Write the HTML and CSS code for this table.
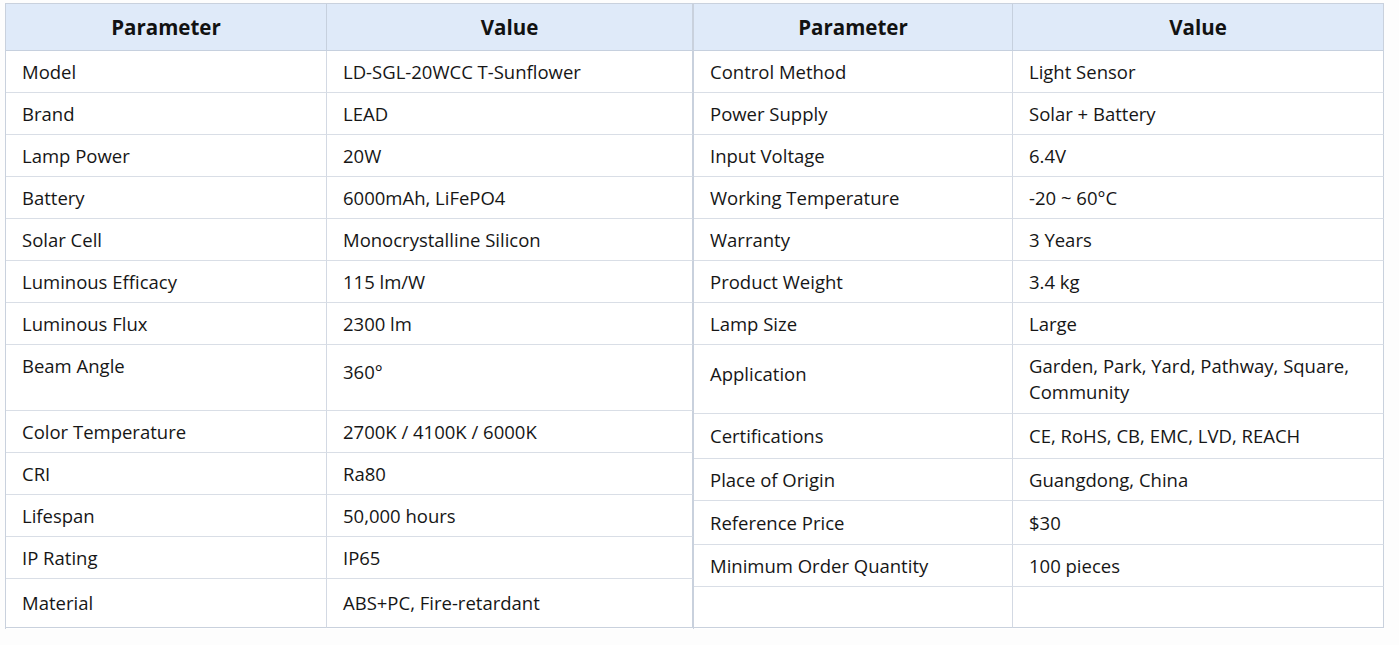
FILE: index.html
```html
<!DOCTYPE html>
<html lang="en">
<head>
<meta charset="utf-8">
<title>Specifications</title>
<link rel="stylesheet" href="styles.css">
</head>
<body>
<div class="wrap">
  <div class="spec spec-left">
    <div class="cell head">Parameter</div><div class="cell head">Value</div>
    <div class="cell">Model</div><div class="cell">LD-SGL-20WCC T-Sunflower</div>
    <div class="cell">Brand</div><div class="cell">LEAD</div>
    <div class="cell">Lamp Power</div><div class="cell">20W</div>
    <div class="cell">Battery</div><div class="cell">6000mAh, LiFePO4</div>
    <div class="cell">Solar Cell</div><div class="cell">Monocrystalline Silicon</div>
    <div class="cell">Luminous Efficacy</div><div class="cell">115 lm/W</div>
    <div class="cell">Luminous Flux</div><div class="cell">2300 lm</div>
    <div class="cell top">Beam Angle</div><div class="cell up">360°</div>
    <div class="cell">Color Temperature</div><div class="cell">2700K / 4100K / 6000K</div>
    <div class="cell">CRI</div><div class="cell">Ra80</div>
    <div class="cell">Lifespan</div><div class="cell">50,000 hours</div>
    <div class="cell">IP Rating</div><div class="cell">IP65</div>
    <div class="cell last">Material</div><div class="cell last">ABS+PC, Fire-retardant</div>
  </div>
  <div class="spec spec-right">
    <div class="cell head">Parameter</div><div class="cell head">Value</div>
    <div class="cell">Control Method</div><div class="cell">Light Sensor</div>
    <div class="cell">Power Supply</div><div class="cell">Solar + Battery</div>
    <div class="cell">Input Voltage</div><div class="cell">6.4V</div>
    <div class="cell">Working Temperature</div><div class="cell">-20 ~ 60°C</div>
    <div class="cell">Warranty</div><div class="cell">3 Years</div>
    <div class="cell">Product Weight</div><div class="cell">3.4 kg</div>
    <div class="cell">Lamp Size</div><div class="cell">Large</div>
    <div class="cell up">Application</div><div class="cell">Garden, Park, Yard, Pathway, Square, Community</div>
    <div class="cell">Certifications</div><div class="cell">CE, RoHS, CB, EMC, LVD, REACH</div>
    <div class="cell">Place of Origin</div><div class="cell">Guangdong, China</div>
    <div class="cell">Reference Price</div><div class="cell">$30</div>
    <div class="cell">Minimum Order Quantity</div><div class="cell">100 pieces</div>
    <div class="cell last"></div><div class="cell last"></div>
  </div>
</div>
</body>
</html>
```
FILE: styles.css
```css
html, body {
  margin: 0;
  padding: 0;
  background: #fdfdfd;
}
body {
  font-family: "Open Sans", "Noto Sans", "Liberation Sans", sans-serif;
  color: #161616;
  font-size: 18.5px;
}
.wrap {
  display: flex;
  padding: 3px 0 0 5px;
}
.spec {
  display: grid;
  background: #ffffff;
  border: 1px solid #c9d1dd;
  border-right: none;
  border-bottom: none;
  box-sizing: border-box;
  height: 626px;
}
.spec-left {
  width: 688px;
  grid-template-columns: 321px 366px;
  grid-template-rows: 47px repeat(7, 42px) 66px repeat(4, 42px) 49px;
}
.spec-right {
  width: 691px;
  grid-template-columns: 319px 371px;
  grid-template-rows: 47px repeat(7, 42px) 69px 45px 42px 44px 42px 41px;
}
.cell {
  display: flex;
  align-items: center;
  padding: 0 14px 0 16px;
  border-right: 1px solid #d3d9e3;
  border-bottom: 1px solid #d9dee6;
  line-height: 26px;
  box-sizing: border-box;
}
.spec-right .cell {
  padding-left: 16px;
}
.cell.head {
  background: #dfeaf9;
  justify-content: center;
  font-weight: 700;
  font-size: 20.5px;
  color: #121212;
  border-bottom: 1px solid #c6d0de;
  border-right: 1px solid #c6d0de;
  padding: 0;
}
.cell.top {
  align-items: flex-start;
  padding-top: 8px;
}
.cell.up {
  padding-bottom: 11px;
}
.cell.last {
  border-bottom: 1px solid #c9d1dd;
}
.spec .cell:nth-child(2n) {
  border-right-color: #c9d1dd;
}
```
